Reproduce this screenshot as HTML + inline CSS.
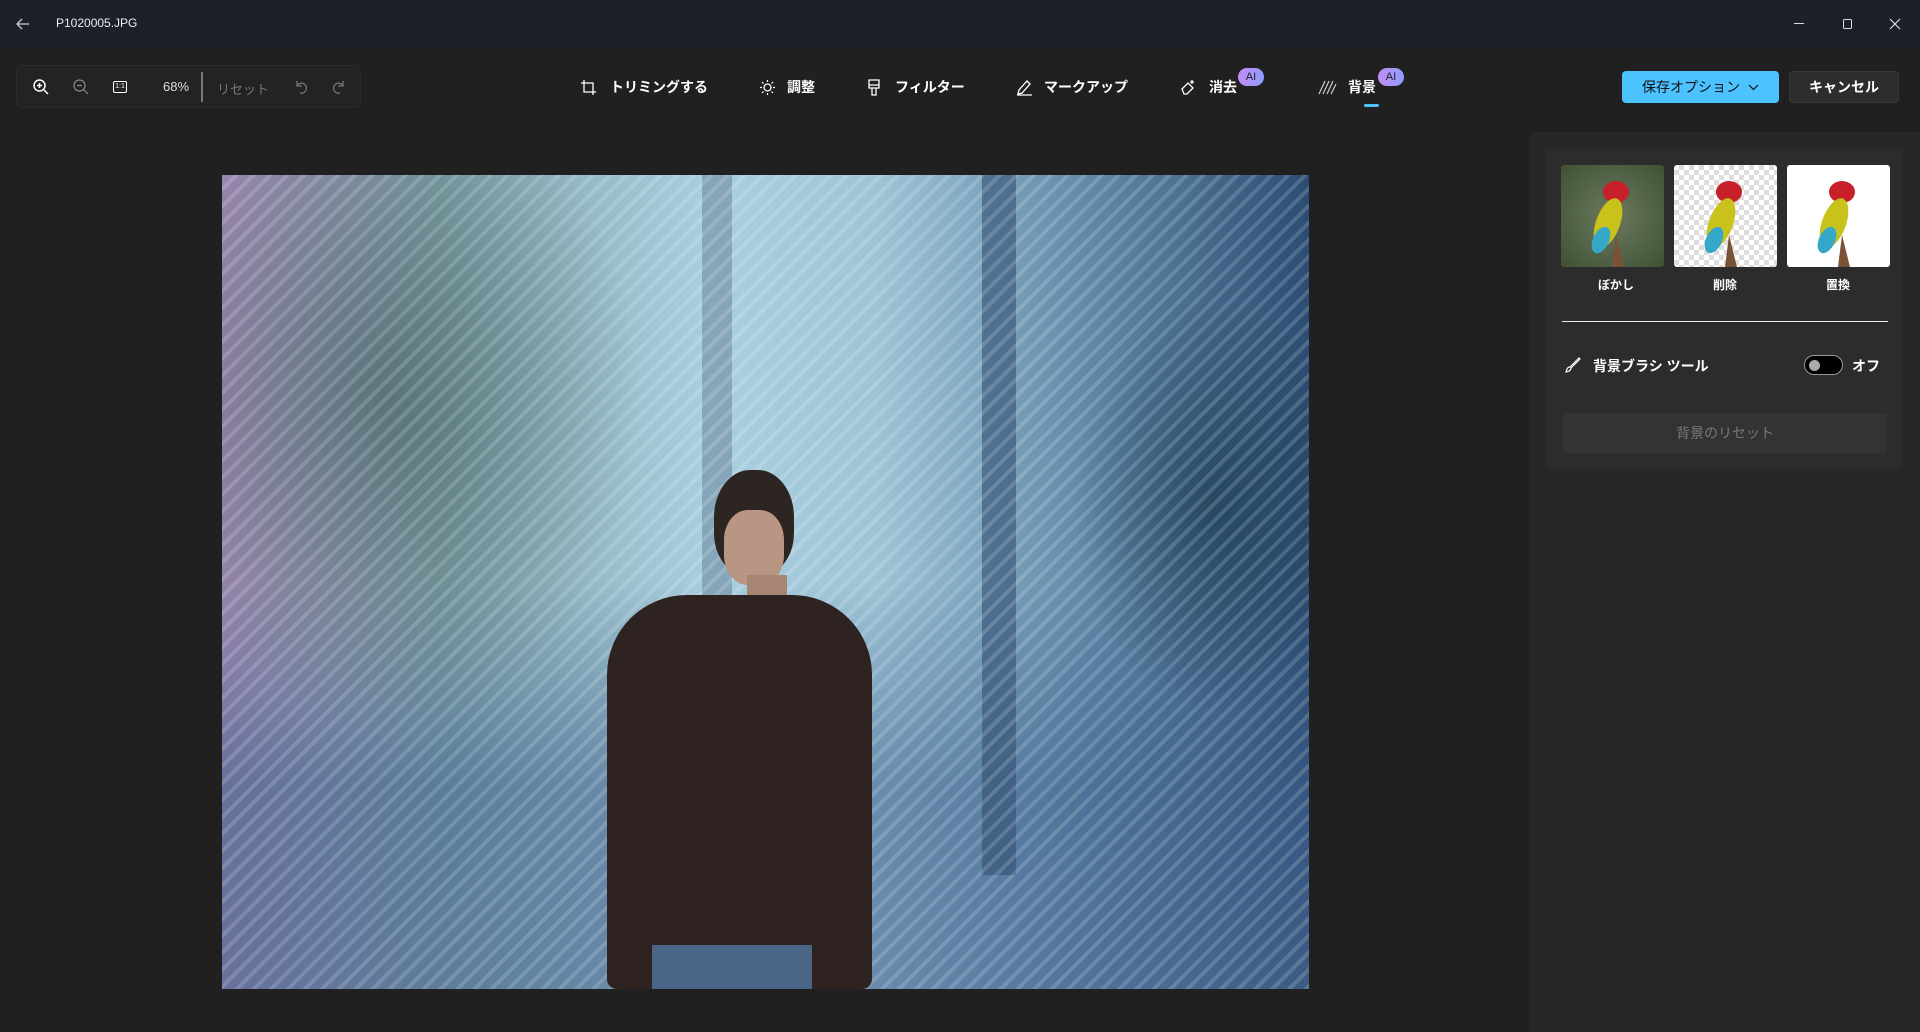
<!DOCTYPE html>
<html><head><meta charset="utf-8"><style>
*{margin:0;padding:0;box-sizing:border-box}
body{width:1920px;height:1032px;background:#202020;font-family:"Liberation Sans","Noto Sans CJK JP",sans-serif;color:#fff;position:relative;overflow:hidden}
.a{position:absolute}
.tb{left:0;top:0;width:1920px;height:49px;background:#1c2029}
.t{font-size:14px;white-space:nowrap}
svg{position:absolute;overflow:visible}
.tool{font-size:14px;font-weight:bold;top:77px}
.ai{width:26px;height:18px;border-radius:9px;background:linear-gradient(90deg,#c38cf5,#8f9cff);color:#222;font-size:11px;text-align:center;line-height:18px;top:68px}
</style></head><body>
<div class="a tb"></div>
<svg style="left:16px;top:18px" width="14" height="12" viewBox="0 0 14 12"><path d="M13 6H1M6 1L1 6l5 5" stroke="#ccc" stroke-width="1.3" fill="none"/></svg>
<div class="a t" style="left:56px;top:16px;font-size:12px;color:#eee">P1020005.JPG</div>
<div class="a" style="left:1794px;top:23px;width:10px;height:1px;background:#ddd"></div>
<div class="a" style="left:1843px;top:19px;width:9px;height:10px;border:1px solid #ddd;border-radius:2px"></div>
<svg style="left:1890px;top:19px" width="10" height="10"><path d="M0 0L10 10M10 0L0 10" stroke="#ddd" stroke-width="1.2"/></svg>

<div class="a" style="left:16px;top:65px;width:345px;height:43px;background:#232323;border:1px solid #2b2b2b;border-radius:6px"></div>
<svg style="left:33px;top:79px" width="16" height="16"><circle cx="6.5" cy="6.5" r="5.5" stroke="#fff" stroke-width="1.5" fill="none"/><path d="M4 6.5h5M6.5 4v5M10.5 10.5L15 15" stroke="#fff" stroke-width="1.5"/></svg>
<svg style="left:73px;top:79px" width="16" height="16"><circle cx="6.5" cy="6.5" r="5.5" stroke="#888" stroke-width="1.2" fill="none"/><path d="M4 6.5h5M10.5 10.5L15 15" stroke="#888" stroke-width="1.2"/></svg>
<div class="a" style="left:113px;top:81px;width:14px;height:12px;border:1.3px solid #fff;border-radius:2px;font-size:7px;text-align:center;line-height:10px">1:1</div>
<div class="a t" style="left:163px;top:79px;font-size:13px;color:#ddd">68%</div>
<div class="a" style="left:201px;top:72px;width:2px;height:30px;background:#777"></div>
<div class="a t" style="left:217px;top:79px;font-size:13px;color:#777">リセット</div>
<svg style="left:294px;top:80px" width="13" height="14"><path d="M3 1v5h5M3 6a5 5 0 1 1 3 7" stroke="#777" stroke-width="1.3" fill="none"/></svg>
<svg style="left:333px;top:80px" width="13" height="14"><path d="M10 1v5H5M10 6a5 5 0 1 0-3 7" stroke="#777" stroke-width="1.3" fill="none"/></svg>

<svg style="left:581px;top:80px" width="15" height="15"><path d="M3 0v12h12M0 3h12v12" stroke="#fff" stroke-width="1.3" fill="none"/></svg>
<div class="a tool" style="left:610px">トリミングする</div>
<svg style="left:760px;top:80px" width="15" height="15"><circle cx="7.5" cy="7.5" r="3.5" stroke="#fff" stroke-width="1.3" fill="none"/><path d="M7.5 0v2M7.5 13v2M0 7.5h2M13 7.5h2M2 2l1.5 1.5M11.5 11.5L13 13M2 13l1.5-1.5M11.5 3.5L13 2" stroke="#fff" stroke-width="1.2"/></svg>
<div class="a tool" style="left:787px">調整</div>
<svg style="left:868px;top:79px" width="12" height="17"><path d="M1 1h10v8H1zM1 6h10M4 9v7h4V9" stroke="#fff" stroke-width="1.3" fill="none"/></svg>
<div class="a tool" style="left:895px">フィルター</div>
<svg style="left:1016px;top:79px" width="17" height="17"><path d="M2 15l1-4 8-9 3 3-8 9zM1 16h15" stroke="#fff" stroke-width="1.3" fill="none"/></svg>
<div class="a tool" style="left:1044px">マークアップ</div>
<svg style="left:1180px;top:79px" width="17" height="17"><path d="M2 10l6-6 5 5-6 6H4zM12 1v4M10 3h4" stroke="#fff" stroke-width="1.3" fill="none"/></svg>
<div class="a tool" style="left:1209px">消去</div>
<div class="a ai" style="left:1238px">AI</div>
<svg style="left:1319px;top:81px" width="17" height="13"><path d="M0 13L6 0M4 13L10 0M8 13L14 0M12 13L17 3" stroke="#ccc" stroke-width="1.2"/></svg>
<div class="a tool" style="left:1348px">背景</div>
<div class="a ai" style="left:1378px">AI</div>
<div class="a" style="left:1364px;top:104px;width:15px;height:3px;border-radius:2px;background:#4cc2ff"></div>

<div class="a" style="left:1622px;top:71px;width:157px;height:32px;background:#4cc2ff;border-radius:4px;color:#111;font-size:14px;line-height:32px;padding-left:20px">保存オプション <svg style="position:relative;display:inline-block;top:-1px;left:4px" width="11" height="7"><path d="M1 1l4.5 4.5L10 1" stroke="#111" stroke-width="1.2" fill="none"/></svg></div>
<div class="a" style="left:1789px;top:71px;width:110px;height:32px;background:#2d2d2d;border:1px solid #383838;border-radius:4px;font-size:14px;font-weight:bold;text-align:center;line-height:30px">キャンセル</div>

<div class="a" style="left:222px;top:175px;width:1087px;height:814px;overflow:hidden;background:linear-gradient(180deg,rgba(0,0,0,0) 0%,rgba(0,0,0,0) 50%,rgba(60,95,140,.55) 75%,rgba(70,100,145,.6) 100%),linear-gradient(90deg,#9b86b0 0%,#7fa0a8 20%,#a9cfe0 45%,#9ec4d6 60%,#5f88a8 80%,#2c4d72 100%)">
 <div class="a" style="left:0;top:0;width:420px;height:560px;background:radial-gradient(ellipse at 40% 40%,rgba(60,90,90,.6),rgba(60,90,90,0) 70%)"></div>
 <div class="a" style="left:850px;top:120px;width:237px;height:420px;background:radial-gradient(ellipse at 60% 50%,rgba(20,50,70,.6),rgba(20,50,70,0) 70%)"></div>
 <div class="a" style="left:480px;top:0;width:30px;height:560px;background:rgba(110,140,160,.6)"></div>
 <div class="a" style="left:760px;top:0;width:34px;height:700px;background:rgba(50,80,115,.6)"></div>
 <div class="a" style="left:0;top:0;width:1087px;height:814px;background:repeating-linear-gradient(-45deg,rgba(255,255,255,.16) 0 4px,rgba(255,255,255,0) 4px 12px)"></div>
 <div class="a" style="left:492px;top:295px;width:80px;height:105px;border-radius:45% 45% 40% 40%;background:#2d2522"></div>
 <div class="a" style="left:502px;top:335px;width:60px;height:75px;border-radius:40%;background:#b99683"></div>
 <div class="a" style="left:525px;top:400px;width:40px;height:30px;background:#a68573"></div>
 <div class="a" style="left:385px;top:420px;width:265px;height:394px;border-radius:80px 80px 10px 10px;background:#2e2321"></div>
 <div class="a" style="left:430px;top:770px;width:160px;height:44px;background:#4a6585"></div>
</div>

<div class="a" style="left:1529px;top:132px;width:391px;height:900px;background:#272727;border-radius:6px 0 0 0"></div>
<div class="a" style="left:1546px;top:149px;width:356px;height:320px;background:#2c2c2c;border-radius:4px"></div>
<div class="a" style="left:1561px;top:165px;width:103px;height:102px;border-radius:3px;background:radial-gradient(circle at 50% 50%,#6c7a5e,#3f5135)"></div>
<div class="a" style="left:1674px;top:165px;width:103px;height:102px;border-radius:3px;background:repeating-conic-gradient(#ddd 0 25%,#fff 0 50%) 0 0/10px 10px"></div>
<div class="a" style="left:1787px;top:165px;width:103px;height:102px;border-radius:3px;background:#fff"></div>
<svg style="left:1561px;top:165px" width="330" height="102">
<g id="p"><ellipse cx="55" cy="27" rx="13" ry="11" fill="#c8202a"/><ellipse cx="47" cy="58" rx="12" ry="26" fill="#c9c21a" transform="rotate(20 47 58)"/><ellipse cx="40" cy="75" rx="8" ry="14" fill="#35a8c8" transform="rotate(25 40 75)"/><path d="M55 70l8 32h-12z" fill="#7a5236"/></g>
<use href="#p" x="113"/><use href="#p" x="226"/>
</svg>
<div class="a t" style="left:1598px;top:276px;font-size:12px;font-weight:bold">ぼかし</div>
<div class="a t" style="left:1713px;top:276px;font-size:12px;font-weight:bold">削除</div>
<div class="a t" style="left:1826px;top:276px;font-size:12px;font-weight:bold">置換</div>
<div class="a" style="left:1562px;top:321px;width:326px;height:1px;background:#eee"></div>
<svg style="left:1565px;top:357px" width="16" height="16"><path d="M1 15c1-4 2-5 4-5l9-9 1 1-9 9c0 2-1 3-5 4z" stroke="#fff" stroke-width="1.2" fill="none"/></svg>
<div class="a t" style="left:1593px;top:356px;font-size:14px;font-weight:bold">背景ブラシ ツール</div>
<div class="a" style="left:1804px;top:355px;width:39px;height:20px;border-radius:10px;background:#000;border:1px solid #999"></div>
<div class="a" style="left:1809px;top:360px;width:11px;height:11px;border-radius:50%;background:#aaa"></div>
<div class="a t" style="left:1852px;top:356px;font-size:14px;font-weight:bold">オフ</div>
<div class="a" style="left:1563px;top:413px;width:324px;height:40px;background:#333;border-radius:3px;color:#787878;font-size:14px;text-align:center;line-height:40px">背景のリセット</div>
</body></html>
